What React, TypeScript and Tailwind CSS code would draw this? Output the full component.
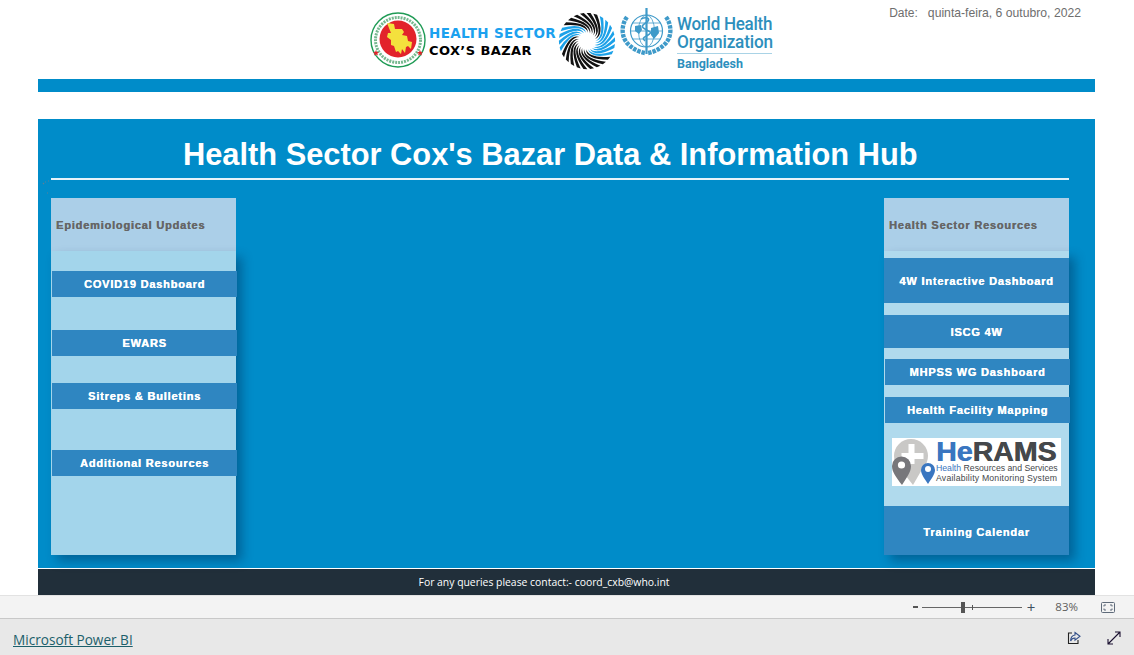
import React from "react";

const LeftLinks = [
  { id: 0, name: "COVID19 Dashboard", cls: "mt-5" },
  { id: 1, name: "EWARS", cls: "mt-[33px]" },
  { id: 2, name: "Sitreps & Bulletins", cls: "mt-[27px]" },
  { id: 3, name: "Additional Resources", cls: "mt-[41px]" },
];

const arialBold = "font-['Liberation_Sans',sans-serif] font-bold";

// swirl logo, tapered arms generated around the centre
const Swirl = () => {
  const count = 26;
  const arms = Array.from({ length: count }, (_, i) => {
    const a = (i / count) * Math.PI * 2;
    const pt = (r: number, t: number) =>
      `${(32 + r * Math.cos(a + t)).toFixed(1)} ${(32 + r * Math.sin(a + t)).toFixed(1)}`;
    const outerDeg = ((i / count) * 360 - 62 + 360) % 360;
    const blue = (outerDeg > 150 && outerDeg < 212) || outerDeg > 295 || outerDeg < 28;
    return (
      <path
        key={i}
        d={`M${pt(9, 0)} Q${pt(19, -0.25)} ${pt(30, -1.1)} L${pt(30, -0.96)} Q${pt(20, -0.08)} ${pt(9, 0)}Z`}
        fill={blue ? "#1ba1e8" : "#111"}
      />
    );
  });
  return (
    <svg width="60" height="60" viewBox="0 0 64 64" className="shrink-0">
      {arms}
    </svg>
  );
};

const Emblem = () => (
  <svg width="56" height="56" viewBox="0 0 56 56" className="shrink-0">
    <circle cx="28" cy="28" r="27" fill="#fff" stroke="#1f9b55" strokeWidth="1.4" />
    <circle cx="28" cy="28" r="22.5" fill="none" stroke="#3c9a5f" strokeWidth="3" strokeDasharray="2 1" opacity="0.7" />
    <circle cx="28" cy="27" r="18.5" fill="#e2232b" />
    <path
      d="M17 11l7 1 1 5 7 0 2 3-2 3 5 1 1 5 4 1-1 7-3-3-2 1-1 6-3-4-1 5-3-3-2 1-2-6-3-1 0-5-4-3 1-4 3 0z"
      fill="#f4e13d"
    />
    <path d="M6 38l.9 1.9 2 .2-1.5 1.3.5 2-1.9-1-1.9 1 .5-2-1.5-1.3 2-.2z" fill="#e2232b" />
    <path d="M50 38l.9 1.9 2 .2-1.5 1.3.5 2-1.9-1-1.9 1 .5-2-1.5-1.3 2-.2z" fill="#e2232b" />
  </svg>
);

const WhoEmblem = () => (
  <svg width="53" height="49" viewBox="0 0 53 49" className="shrink-0">
    <g fill="none" stroke="#3f9ac9">
      <circle cx="26.5" cy="23" r="16" strokeWidth="1.2" />
      <ellipse cx="26.5" cy="23" rx="8" ry="16" strokeWidth="0.8" />
      <path d="M10.5 23h32M12.5 15h28M12.5 31h28" strokeWidth="0.8" />
      <path d="M26.5 0v46" strokeWidth="2.2" />
      <path d="M21 11c6-3 10 0 6 3s-7 4-2 7 8 3 3 6-6 3-3 6" strokeWidth="1.6" />
      <path
        d="M7 9c-6 8-6 20 1 27 5 5 11 8 17 9M46 9c6 8 6 20-1 27-5 5-11 8-17 9"
        strokeWidth="4.4"
        strokeDasharray="3.5 1"
      />
    </g>
    <path d="M15 18l6-1 1 5-3 4-4-3zM31 20l7-2 1 7-5 6-3-4z" fill="#3f9ac9" />
  </svg>
);

const HeRams = () => (
  <div className="mx-auto mt-[15px] flex h-12 w-[169px] bg-white">
    <svg width="58" height="48" viewBox="0 0 58 48" className="shrink-0">
      <circle cx="19" cy="18" r="17" fill="#c9c8c6" />
      <path d="M6 28h26L21 47z" fill="#c9c8c6" />
      <path d="M16.5 6h6v9h9v6h-9v5h-6v-5h-7v-6h7z" fill="#fff" />
      <path d="M10 47C4 39 0 34 0 28a9.5 9.5 0 0 1 19 0c0 6-4 11-9 19z" fill="#77777b" />
      <circle cx="9.5" cy="27" r="3.6" fill="#fff" />
      <path d="M36 46c-4-6-7-10-7-14a7 7 0 0 1 14 0c0 4-3 8-7 14z" fill="#3a76c0" />
      <circle cx="36" cy="31" r="3" fill="#fff" />
    </svg>
    <div className="-ml-[14px] min-w-0 whitespace-nowrap font-['Liberation_Sans',sans-serif] text-[#45484b]">
      <div className="h-[26px] pt-px text-[28.5px] leading-[25px] font-bold [text-shadow:0.6px_0_0_currentColor]">
        <span className="text-[#3a76c0]">He</span>RAMS
      </div>
      <div className="text-[8.7px] leading-[9px]">
        <span className="text-[#3a76c0]">Health</span> Resources and Services
      </div>
      <div className="text-[8.7px] leading-[10px] tracking-[0.2px]">Availability Monitoring System</div>
    </div>
  </div>
);

const LinkBar = ({ name, cls }: { name: string; cls: string }) => (
  <div
    className={`flex items-center justify-center bg-[#2f86c1] text-[11px] tracking-[0.8px] text-white [text-shadow:0.35px_0_0_currentColor] ${arialBold} ${cls}`}
  >
    {name}
  </div>
);

const ColumnHeader = ({ title }: { title: string }) => (
  <div
    className={`flex h-[53px] items-center bg-[#abcfe8] pt-0.5 pl-[5px] text-[11px] tracking-[0.8px] text-[#666666] [text-shadow:0.35px_0_0_currentColor] ${arialBold}`}
  >
    {title}
  </div>
);

const App = () => {
  return (
    <div className="flex h-[655px] w-[1134px] flex-col overflow-hidden bg-white font-['Liberation_Sans',sans-serif]">
      {/* logos and date */}
      <div className="flex h-[79px] shrink-0 items-start pr-[53px] pl-[370px]">
        <div className="mt-3 flex items-start">
          <Emblem />
          <div className="mt-[13px] ml-[3px] w-[130px] font-['DejaVu_Sans',sans-serif] text-[13.5px] leading-[17px] font-bold whitespace-nowrap">
            <div className="tracking-[0.35px] text-[#1ba1ef]">HEALTH SECTOR</div>
            <div className="text-[13px] tracking-[0.4px] text-black">COX’S BAZAR</div>
          </div>
          <div className="-mt-[1px] -ml-[2px]">
            <Swirl />
          </div>
          <div className="-mt-[4px] ml-[3px]">
            <WhoEmblem />
          </div>
          <div className="mt-[4px] ml-[4px] w-[95px] font-['Roboto',sans-serif] whitespace-nowrap text-[#2d8fbd]">
            <div className="origin-left scale-x-[0.92] text-[18.5px] leading-[17px] font-medium tracking-[-0.3px]">
              World Health
            </div>
            <div className="origin-left scale-x-[0.93] text-[18.5px] leading-[18px] font-medium tracking-[-0.2px]">
              Organization
            </div>
            <div className="mt-[2px] border-t border-[#a9d3e6] pt-[3px] text-[12.5px] leading-[14px] font-bold">
              Bangladesh
            </div>
          </div>
        </div>
        <div className="mt-[5px] ml-auto flex gap-[10px] text-xs text-[#6e6e6e]">
          <span>Date:</span>
          <span className="text-[12.2px]">quinta-feira, 6 outubro, 2022</span>
        </div>
      </div>

      <div className="ml-[38px] h-[13px] w-[1057px] shrink-0 bg-[#008cc9]"></div>

      {/* main panel */}
      <div className="relative mt-[27px] ml-[38px] h-[449px] w-[1057px] shrink-0 bg-[#008cc9] pt-[18px]">
        <h1 className={`h-[41px] pl-[145px] text-[30.8px] leading-9 text-white ${arialBold}`}>
          Health Sector Cox&apos;s Bazar Data &amp; Information Hub
        </h1>
        <div className="mr-[26px] ml-[13px] h-0.5 bg-[#e6f3fa]"></div>

        {/* stray marks on the canvas */}
        <svg width="12" height="16" viewBox="0 0 12 16" className="absolute top-[61px] left-[4px]">
          <path d="M1 4l1-1M3 2h1M6 1h1M5 13h1" stroke="#5f7f95" strokeWidth="1.2" />
        </svg>

        <div className="mt-[18px] flex justify-between pr-[26px] pl-[13px]">
          <div className="w-[185px]">
            <ColumnHeader title="Epidemiological Updates" />
            <div className="flow-root h-[304px] w-[185px] bg-[#a3d5eb] shadow-[6px_6px_10px_rgba(0,40,80,0.4)]">
              {LeftLinks.map((link) => (
                <LinkBar key={link.id} name={link.name} cls={`ml-px h-[26px] w-[185px] ${link.cls}`} />
              ))}
            </div>
          </div>

          <div className="w-[185px]">
            <ColumnHeader title="Health Sector Resources" />
            <div className="h-[304px] w-[185px] bg-[#b0daed] pt-[7px] shadow-[6px_6px_10px_rgba(0,40,80,0.4)]">
              <LinkBar name="4W Interactive Dashboard" cls="h-[45px] pt-0.5" />
              <LinkBar name="ISCG 4W" cls="mt-3 h-[33px] pt-0.5" />
              <LinkBar name="MHPSS WG Dashboard" cls="mt-[11px] ml-px h-[26px] w-[185px]" />
              <LinkBar name="Health Facility Mapping" cls="mt-3 ml-px h-[26px] w-[185px]" />
              <HeRams />
              <LinkBar name="Training Calendar" cls="mt-5 h-[49px] pt-1" />
            </div>
          </div>
        </div>
      </div>

      {/* footer */}
      <div className="mt-px ml-[38px] flex h-[26px] w-[1057px] shrink-0 items-center justify-center bg-[#212f3a] pt-0.5 pr-[45px] font-['Open_Sans',sans-serif] text-[10.4px] text-white">
        For any queries please contact:- coord_cxb@who.int
      </div>

      {/* power bi zoom bar */}
      <div className="flex h-6 shrink-0 items-center justify-end border-t border-b border-t-[#e2e2e2] border-b-[#c8c8c8] bg-[#f3f3f3] pr-[19px] font-['Open_Sans',sans-serif] text-xs text-[#605e5c]">
        <span className="mr-[4px] h-0.5 w-[5px] bg-[#555]"></span>
        <div className="relative h-px w-[100px] bg-[#666]">
          <span className="absolute -top-[5px] left-[39px] h-[11px] w-1 bg-[#555]"></span>
          <span className="absolute -top-[2px] left-[50px] h-[5px] w-px bg-[#555]"></span>
        </div>
        <span className="ml-[5px] text-[15px] leading-none text-[#3f5060]">+</span>
        <span className="ml-5 text-[11.5px]">83%</span>
        <svg width="14" height="11" viewBox="0 0 14 11" className="ml-[23px]">
          <rect x="0.5" y="0.5" width="13" height="10" rx="1" fill="none" stroke="#5f6b7a" />
          <path d="M3 4.5V3h2M9 3h2v1.5M11 6.5V8H9M5 8H3V6.5" fill="none" stroke="#5f6b7a" />
        </svg>
      </div>

      {/* power bi footer */}
      <div className="flex flex-1 items-center bg-[#e8e8e8] pt-[6px] pr-[13px] pl-[13px]">
        <a className="font-['Open_Sans',sans-serif] text-[13.6px] text-[#1c5f6b] underline">Microsoft Power BI</a>
        <svg width="14" height="14" viewBox="0 0 14 14" className="-mt-[4px] ml-auto">
          <path d="M5 2H1.5v10.5h9.5V9" fill="none" stroke="#222" strokeWidth="1.1" />
          <path d="M8 1.5l5 3.8-5 3.8V7C5.8 7 4.4 8 3.6 10c0-3.4 1.6-5.6 4.4-6z" fill="none" stroke="#34508a" strokeWidth="1.1" />
        </svg>
        <svg width="14" height="14" viewBox="0 0 14 14" className="-mt-[4px] ml-[26px]">
          <path d="M1 13L13 1M8 1h5v5M1 8v5h5" fill="none" stroke="#1a1030" strokeWidth="1.1" />
        </svg>
      </div>
    </div>
  );
};

export default App;
